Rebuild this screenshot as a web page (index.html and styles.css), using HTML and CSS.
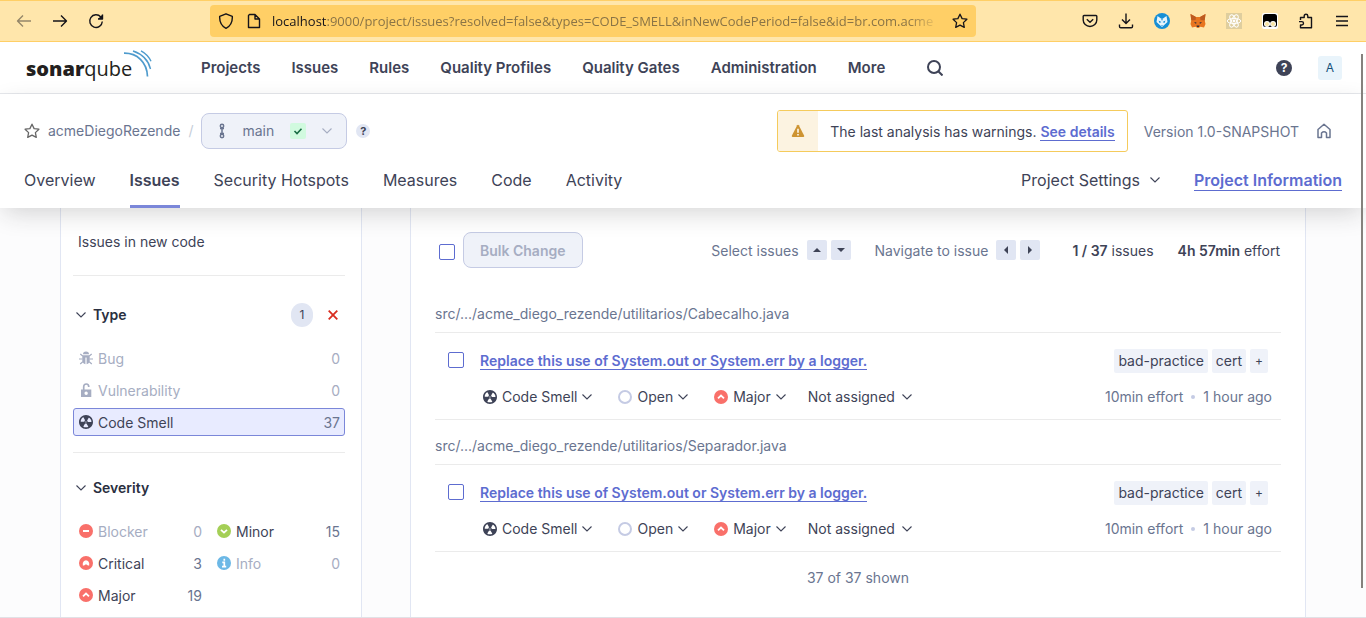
FILE: index.html
```html
<!DOCTYPE html>
<html lang="en">
<head>
<meta charset="utf-8">
<title>Issues - acmeDiegoRezende</title>
<link rel="stylesheet" href="styles.css">
</head>
<body>
<svg class="defs" aria-hidden="true">
  <symbol id="chevron" viewBox="0 0 10 10"><path d="M.5 2.500 5 7l4.500-4.500" fill="none" stroke="currentColor" stroke-width="1.100"/></symbol>
  <symbol id="smell" viewBox="2 2 12 12"><path fill="currentColor" fill-rule="evenodd" d="M8 2C4.700 2 2 4.700 2 8s2.700 6 6 6 6-2.700 6-6-2.700-6-6-6zm-.5 5.500h.9v.9h-.9v-.9zm-3.800.2c-.1 0-.2-.1-.2-.2 0-.4.100-1.200.600-2S5.300 4.200 5.600 4c.2 0 .3 0 .3.100l1.300 2.300c0 .1 0 .2-.1.200-.1.200-.2.300-.3.500-.1.200-.2.400-.2.500 0 .1-.1.200-.2.200l-2.700-.1zM9.900 12c-.3.200-1.100.5-2 .5-.9 0-1.700-.3-2-.5-.1 0-.1-.2-.1-.3l1.300-2.300c0-.1.100-.1.200-.1.200.1.300.1.500.1s.4 0 .5-.1c.1 0 .2 0 .2.100l1.300 2.300c.2.200.2.300.1.300zm2.500-4.100L9.700 8c-.1 0-.2-.1-.2-.2 0-.2-.1-.4-.2-.5 0-.1-.2-.3-.3-.4-.1 0-.1-.1 0-.2l1.300-2.300c.1-.1.200-.1.300-.1.300.2 1 .7 1.500 1.500s.6 1.600.6 2c0 0-.1.100-.3.100z"/></symbol>
  <symbol id="major" viewBox="0 0 14 14"><circle cx="7" cy="7" r="7" fill="#f9706a"/><path d="M4 8.400 7 5.600l3 2.800" fill="none" stroke="#fff" stroke-width="1.800"/></symbol>
  <symbol id="star" viewBox="0 0 16 16"><path d="m8 1.200 2.100 4.400 4.800.6-3.500 3.400.9 4.800L8 12.100l-4.300 2.300.9-4.800L1.100 6.200l4.800-.6z" fill="none" stroke="currentColor" stroke-width="1.300" stroke-linejoin="round"/></symbol>
</svg>

<div class="browser">
  <div class="browser-nav">
    <button class="tool faded" aria-label="Back"><svg viewBox="0 0 16 16"><path d="M15 8H1.500M7 2.500 1.500 8 7 13.500"/></svg></button>
    <button class="tool" aria-label="Forward"><svg viewBox="0 0 16 16"><path d="M1 8h13.500M9 2.500 14.500 8 9 13.500"/></svg></button>
    <button class="tool" aria-label="Reload"><svg viewBox="0 0 16 16"><path d="M12.800 4A6.300 6.300 0 1 0 14.300 8.500M14.500 1.500v4.500H10"/><path d="M14.500 1.500V6H10z" fill="currentColor" stroke="none"/></svg></button>
  </div>
  <div class="address">
    <svg class="tool-icon" viewBox="0 0 16 16"><path d="M8 .8 14.300 3.300c.3 5-1.400 9.500-6.300 12-4.900-2.500-6.600-7-6.300-12z"/></svg>
    <svg class="tool-icon" viewBox="0 0 16 16"><path d="M3.500 1.500H9l4.500 4.500v8.500h-11v-12zM9 1.500V6h4.500"/></svg>
    <div class="url"><span class="host">localhost</span>:9000/project/issues?resolved=false&amp;types=CODE_SMELL&amp;inNewCodePeriod=false&amp;id=br.com.acme</div>
    <button class="tool" aria-label="Bookmark"><svg viewBox="0 0 16 16"><use href="#star"/></svg></button>
  </div>
  <div class="extensions">
    <button class="tool" aria-label="Pocket"><svg viewBox="0 0 16 16"><path d="M2 2.500h12q.8 0 .8.800V7A6.800 6.500 0 0 1 1.200 7V3.300q0-.8.800-.8zM4.800 6.300 8 9.300l3.200-3"/></svg></button>
    <button class="tool" aria-label="Downloads"><svg viewBox="0 0 16 16"><path d="M8 .5v10M4 6.500l4 4 4-4M1.500 11.500v2q0 1.300 1.300 1.300h10.400q1.300 0 1.300-1.300v-2"/></svg></button>
    <button class="tool" aria-label="Wolf extension"><svg viewBox="0 0 16 16"><g stroke="none"><circle cx="8" cy="8" r="8" fill="#168fd6"/><path d="M3.500 3 7 5.500h2L12.500 3l1 6L8 14 2.500 9z" fill="#e8f5fd"/><path d="m4.500 7.500 3 1.500-2 1zM11.500 7.500l-3 1.500 2 1zM7 12h2l-1 1zM7 5.500h2L8 8z" fill="#168fd6"/></g></svg></button>
    <button class="tool" aria-label="Fox wallet"><svg viewBox="0 0 16 16"><g stroke="none"><path d="m.5 1 5.500 3h4l5.500-3-.8 6.500.8 3.500-1.500 3.500-3.500-.8L8.500 15h-1l-2-1.300-3.500.8L.500 11l.8-3.500z" fill="#e8751f"/><path d="m.5 1 5.500 3-.5 3-4.200.5zM15.500 1 10 4l.5 3 4.200.5z" fill="#bd5a20"/><path d="m4 9 2.500.5-.5 1.500zM12 9l-2.500.5L10 11zM6.500 12.500h3L9 14H7z" fill="#30303a"/></g></svg></button>
    <button class="tool" aria-label="React tools"><svg viewBox="0 0 16 16"><path d="M0 0h16v16H0z" fill="#dfce9e" stroke="none"/><g stroke="#fff" stroke-width="1" fill="none"><ellipse cx="8" cy="8" rx="6.800" ry="2.600"/><ellipse cx="8" cy="8" rx="6.800" ry="2.600" transform="rotate(60 8 8)"/><ellipse cx="8" cy="8" rx="6.800" ry="2.600" transform="rotate(120 8 8)"/></g><circle cx="8" cy="8" r="1.400" fill="#fff" stroke="none"/></svg></button>
    <button class="tool" aria-label="Script manager"><svg viewBox="0 0 16 16"><g stroke="none"><rect width="16" height="16" rx="2" fill="#fff"/><rect x="1" y="1" width="14" height="13" rx="2.500" fill="#000"/><circle cx="5" cy="11" r="3" fill="#fff"/><circle cx="11" cy="11" r="3" fill="#fff"/><circle cx="5" cy="11" r="2" fill="#f7e3a4"/><circle cx="11" cy="11" r="2" fill="#f7e3a4"/></g></svg></button>
    <button class="tool" aria-label="Extensions"><svg viewBox="0 0 16 16"><path d="M2.500 7V4.500h3.700V3a1.800 1.800 0 0 1 3.600 0v1.500h3.700v10.300H2.500V12h1.300a1.700 1.700 0 0 0 0-3.400H1"/></svg></button>
    <button class="tool" aria-label="Menu"><svg viewBox="0 0 16 16"><path d="M2 3.500h12M2 8h12M2 12.500h12"/></svg></button>
  </div>
</div>

<nav class="global-nav">
  <a class="logo" href="#" aria-label="SonarQube"><span class="logo-text"><b>sonar</b>qube</span><svg class="waves" viewBox="0 0 28 28" fill="none" stroke="#4e9bcd" stroke-width="1.400"><path d="M0 3.200C13 3 23 12 23.500 26.500" stroke-width="1.700"/><path d="M9 1C18 4 24.500 10.500 26.500 19"/><path d="M17 .8c4.500 2.400 8 6 10 10.500"/></svg></a>
  <div class="global-links">
    <a href="#">Projects</a><a href="#">Issues</a><a href="#">Rules</a><a href="#">Quality Profiles</a><a href="#">Quality Gates</a><a href="#">Administration</a><a href="#">More</a>
  </div>
  <button class="search" aria-label="Search"><svg viewBox="0 0 16 16" fill="none" stroke="currentColor" stroke-width="2"><circle cx="7" cy="7" r="6"/><path d="m11.300 11.300 4.200 4.200"/></svg></button>
  <button class="help" aria-label="Help">?</button>
  <button class="avatar">A</button>
</nav>

<header class="project">
  <div class="project-top">
    <button class="favorite" aria-label="Favorite"><svg viewBox="0 0 16 16"><use href="#star"/></svg></button>
    <a class="project-name" href="#">acmeDiegoRezende</a>
    <span class="slash">/</span>
    <button class="branch">
      <svg class="branch-icon" viewBox="0 0 8 16" fill="none" stroke="currentColor" stroke-width="1.500"><circle cx="4" cy="3" r="1.700"/><circle cx="4" cy="13" r="1.700"/><path d="M4 4.700v6.600M2 5.500h4M2 10.500h4"/></svg>
      <span>main</span>
      <svg class="passed" viewBox="0 0 16 16"><rect width="16" height="16" rx="2" fill="#d1fadf"/><path d="m4.500 8 2.500 2.500 4.500-4.700" fill="none" stroke="#176b43" stroke-width="1.600"/></svg>
      <svg class="chevron dim"><use href="#chevron"/></svg>
    </button>
    <button class="hint" aria-label="Branch help">?</button>
    <div class="warning">
      <span class="warning-icon"><svg viewBox="0 0 14 14"><path d="M7 .8q.5 0 .8.500l5.400 10.500q.3 1-.7 1.200h-11q-1-.2-.7-1.200L6.200 1.300Q6.500.8 7 .8z" fill="#ce9432"/><path d="M7 4.800v4M7 10v1.600" stroke="#fff" stroke-width="1.500"/></svg></span>
      <span class="warning-text">The last analysis has warnings. <a class="link" href="#">See details</a></span>
    </div>
    <span class="version">Version 1.0-SNAPSHOT</span>
    <a class="home" href="#" aria-label="Homepage"><svg viewBox="0 0 16 16" fill="none" stroke="currentColor" stroke-width="1.500" stroke-linejoin="round"><path d="M2 6.500 8 1.200l6 5.300V14.500h-3.500V10q-2.500-2.500-5 0v4.500H2z"/></svg></a>
  </div>
  <div class="tabs">
    <a href="#">Overview</a><a class="active" href="#">Issues</a><a href="#">Security Hotspots</a><a href="#">Measures</a><a href="#">Code</a><a href="#">Activity</a>
    <button class="settings">Project Settings <svg class="chevron"><use href="#chevron"/></svg></button>
    <a class="information" href="#"><span class="link">Project Information</span></a>
  </div>
</header>

<div class="page">
  <aside class="filters">
    <button class="new-code">Issues in new code</button>
    <section class="facet">
      <div class="facet-head">
        <button class="facet-title"><svg class="chevron"><use href="#chevron"/></svg>Type</button>
        <span class="count">1</span>
        <button class="clear" aria-label="Clear"><svg viewBox="0 0 10 10" stroke="#d92d20" stroke-width="1.800"><path d="m.7.700 8.600 8.600M9.300.7.700 9.300"/></svg></button>
      </div>
      <button class="item off"><svg viewBox="0 0 14 14" fill="currentColor"><path d="M4 3.300a3 2.800 0 0 1 6 0zM3.300 4.200h7.400v6.300Q9.500 13 7.600 13.300V6.500H6.400v6.800Q4.500 13 3.300 10.500z"/><path d="m1.300 3 2.400 2M0 8h3.500M1.200 13l2.600-2.200M12.700 3l-2.400 2M14 8h-3.500M12.800 13l-2.600-2.200" stroke="currentColor" stroke-width="1.200"/></svg><span>Bug</span><span class="num">0</span></button>
      <button class="item off"><svg viewBox="0 0 14 14" fill="currentColor"><path fill-rule="evenodd" d="M2 6.500h10.300V14H2zM7.100 8.500a1.700 1.700 0 1 0 .1 3.400 1.700 1.700 0 0 0-.1-3.400z"/><path d="M4.700 7V4q0-3 2.600-3 2.500 0 2.500 3" fill="none" stroke="currentColor" stroke-width="1.700"/></svg><span>Vulnerability</span><span class="num">0</span></button>
      <button class="item selected"><svg><use href="#smell"/></svg><span>Code Smell</span><span class="num">37</span></button>
    </section>
    <section class="facet severity">
      <div class="facet-head">
        <button class="facet-title"><svg class="chevron"><use href="#chevron"/></svg>Severity</button>
      </div>
      <div class="columns">
        <button class="item off"><svg viewBox="0 0 14 14"><circle cx="7" cy="7" r="7" fill="#f9706a"/><path d="M4 7h6" stroke="#fff" stroke-width="2"/></svg><span>Blocker</span><span class="num">0</span></button>
        <button class="item"><svg viewBox="0 0 14 14"><circle cx="7" cy="7" r="7" fill="#a4cf56"/><path d="m4 5.800 3 2.800 3-2.800" fill="none" stroke="#fff" stroke-width="1.800"/></svg><span>Minor</span><span class="num">15</span></button>
        <button class="item"><svg viewBox="0 0 14 14"><circle cx="7" cy="7" r="7" fill="#f9706a"/><path d="M3.800 9.500V7Q4.500 4.300 7 4.300T10.200 7v2.500H9L7 8.200 5 9.500z" fill="#fff"/></svg><span>Critical</span><span class="num">3</span></button>
        <button class="item off"><svg viewBox="0 0 14 14"><circle cx="7" cy="7" r="7" fill="#6cb8e6"/><path d="M7.300 2.700v2M5.300 6.300h2v4.200M5 10.700h4.200" fill="none" stroke="#fff" stroke-width="1.700"/></svg><span>Info</span><span class="num">0</span></button>
        <button class="item"><svg><use href="#major"/></svg><span>Major</span><span class="num">19</span></button>
      </div>
    </section>
  </aside>

  <main class="issues">
    <div class="toolbar">
      <input type="checkbox" class="check" aria-label="Select all issues">
      <button class="bulk" disabled>Bulk Change</button>
      <div class="keys"><span>Select issues</span><kbd><svg viewBox="0 0 8 8"><path d="M0 6h8L4 2z"/></svg></kbd><kbd><svg viewBox="0 0 8 8"><path d="M0 2h8L4 6z"/></svg></kbd></div>
      <div class="keys"><span>Navigate to issue</span><kbd><svg viewBox="0 0 8 8"><path d="M6 0v8L2 4z"/></svg></kbd><kbd><svg viewBox="0 0 8 8"><path d="M2 0v8l4-4z"/></svg></kbd></div>
      <span class="total"><b>1 / 37</b> issues</span>
      <span class="effort"><b>4h 57min</b> effort</span>
    </div>

    <div class="path">src/.../acme_diego_rezende/utilitarios/Cabecalho.java</div>
    <article class="issue">
      <input type="checkbox" class="check" aria-label="Select issue in Cabecalho.java">
      <div class="issue-body">
        <div class="issue-line"><a class="link" href="#">Replace this use of System.out or System.err by a logger.</a>
          <div class="tags"><span>bad-practice</span><span>cert</span><button aria-label="Add tag">+</button></div></div>
        <div class="issue-line meta">
          <button class="kind"><svg><use href="#smell"/></svg>Code Smell<svg class="chevron"><use href="#chevron"/></svg></button>
          <button class="status"><i class="ring"></i>Open<svg class="chevron"><use href="#chevron"/></svg></button>
          <button class="sev"><svg><use href="#major"/></svg>Major<svg class="chevron"><use href="#chevron"/></svg></button>
          <button class="assignee">Not assigned<svg class="chevron"><use href="#chevron"/></svg></button>
          <div class="age"><span>10min effort</span><i class="dot"></i><span>1 hour ago</span></div>
        </div>
      </div>
    </article>

    <div class="path">src/.../acme_diego_rezende/utilitarios/Separador.java</div>
    <article class="issue">
      <input type="checkbox" class="check" aria-label="Select issue in Separador.java">
      <div class="issue-body">
        <div class="issue-line"><a class="link" href="#">Replace this use of System.out or System.err by a logger.</a>
          <div class="tags"><span>bad-practice</span><span>cert</span><button aria-label="Add tag">+</button></div></div>
        <div class="issue-line meta">
          <button class="kind"><svg><use href="#smell"/></svg>Code Smell<svg class="chevron"><use href="#chevron"/></svg></button>
          <button class="status"><i class="ring"></i>Open<svg class="chevron"><use href="#chevron"/></svg></button>
          <button class="sev"><svg><use href="#major"/></svg>Major<svg class="chevron"><use href="#chevron"/></svg></button>
          <button class="assignee">Not assigned<svg class="chevron"><use href="#chevron"/></svg></button>
          <div class="age"><span>10min effort</span><i class="dot"></i><span>1 hour ago</span></div>
        </div>
      </div>
    </article>
    <p class="shown">37 of 37 shown</p>
  </main>
</div>
<div class="scroll-thumb"></div>
</body>
</html>
```
FILE: styles.css
```css
* { box-sizing: border-box; }
body {
  margin: 0;
  height: 100vh;
  display: flex;
  flex-direction: column;
  overflow: hidden;
  font: 14px/20px Inter, "Liberation Sans", sans-serif;
  color: #3e4357;
  background: #fff;
}
button { font: inherit; color: inherit; background: none; border: 0; padding: 0; margin: 0; display: flex; align-items: center; }
a { color: inherit; text-decoration: none; }
svg { flex: none; display: block; }
b { font-weight: 600; }
.defs { position: absolute; width: 0; height: 0; }
.chevron { width: 10px; height: 10px; }
.link { color: #5d6cd0; font-weight: 600; border-bottom: 1px solid #5d6cd0; }
.check {
  appearance: none;
  width: 16px;
  height: 16px;
  margin: 0;
  flex: none;
  border: 1px solid #5d6cd0;
  border-radius: 2px;
  background: #fff;
}

/* Browser bar */
.browser {
  flex: none;
  height: 42px;
  display: flex;
  align-items: center;
  background: #ffe6ab;
  border-top: 1px solid #ffcf66;
  border-bottom: 1px solid #ffcf66;
  color: #15141a;
}
.browser-nav { display: flex; gap: 20px; padding-left: 16px; width: 210px; flex: none; }
.tool { width: 16px; height: 16px; flex: none; }
.tool svg, .tool-icon { width: 16px; height: 16px; fill: none; stroke: currentColor; stroke-width: 1.4; stroke-linejoin: round; flex: none; }
.faded { opacity: .45; }
.address {
  display: flex;
  align-items: center;
  gap: 12px;
  width: 766px;
  height: 32px;
  padding: 0 8px;
  border-radius: 4px;
  background: #ffcf66;
}
.url {
  flex: 1;
  min-width: 0;
  overflow: hidden;
  white-space: nowrap;
  margin-left: -2px;
  font: 13px/20px "Open Sans", "Noto Sans", sans-serif;
  color: #8a7446;
  -webkit-mask-image: linear-gradient(to left, transparent, #000 32px);
  mask-image: linear-gradient(to left, transparent, #000 32px);
}
.host { color: #15141a; }
.extensions { display: flex; gap: 20px; margin-left: auto; padding-right: 16px; }

/* Global navigation */
.global-nav {
  flex: none;
  height: 52px;
  display: flex;
  align-items: center;
  padding: 0 24px;
  border-bottom: 1px solid #e6e8ec;
}
.logo { display: flex; width: 177px; padding-left: 2px; padding-bottom: 4px; color: #231f20; }
.logo-text { padding-top: 6px; font: 20px/26px "Open Sans", sans-serif; }
.logo-text b { font-weight: 800; }
.waves { width: 28px; height: 28px; margin-left: -8px; }
.global-links { display: flex; gap: 31px; font-size: 15px; font-weight: 600; }
.search { margin-left: 42px; }
.search svg { width: 16px; height: 16px; }
.help { justify-content: center; width: 16px; height: 16px; margin-left: auto; border-radius: 50%; background: #3e4357; color: #fff; font-size: 12px; font-weight: 700; }
.avatar { justify-content: center; width: 24px; height: 24px; margin-left: 26px; border-radius: 3px; background: #e9f4fb; color: #15507a; font-size: 12px; }

/* Project header */
.project { flex: none; position: relative; z-index: 1; padding: 16px 24px 0; background: #fff; box-shadow: 0 8px 24px -4px #22222233; }
.project-top { display: flex; align-items: center; height: 42px; color: #6a7590; }
.favorite svg { width: 16px; height: 16px; color: #666; }
.project-name { margin-left: 8px; }
.slash { margin: 0 8px; color: #c5cdd8; }
.branch { height: 36px; width: 146px; padding: 0 14px 0 16px; border: 1px solid #c5cbe4; border-radius: 8px; background: #eff2f9; }
.branch-icon { width: 8px; height: 16px; margin-right: 16px; }
.passed { width: 16px; height: 16px; margin-left: 16px; margin-right: auto; }
.dim { color: #a6adc2; }
.hint { justify-content: center; width: 14px; height: 14px; margin-left: 9px; border-radius: 50%; background: #e1e6f3; color: #3e4357; font-size: 11px; font-weight: 700; }
.warning { display: flex; height: 42px; margin-left: auto; border: 1px solid #f5cb5c; border-radius: 3px; color: #3e4357; overflow: hidden; }
.warning-icon { display: grid; place-items: center; width: 40px; background: #fcf3e1; }
.warning-icon svg { width: 14px; height: 14px; }
.warning-text { padding: 11px 12px 9px; }
.version { margin-left: 16px; padding-top: 2px; }
.home { margin: 0 10px 0 17px; }
.home svg { width: 16px; height: 16px; }
.tabs { display: flex; height: 56px; gap: 34px; font-size: 16px; line-height: 24px; }
.tabs > * { display: flex; align-items: center; white-space: nowrap; }
.tabs .active { font-weight: 600; box-shadow: inset 0 -3px #7b87d9; }
.tabs .settings { margin-left: auto; gap: 10px; }
.tabs .link { line-height: 20px; }

/* Page */
.page {
  flex: 1;
  min-height: 0;
  display: flex;
  gap: 48px;
  padding: 0 60px;
  overflow: hidden;
  background: #fcfcfd;
  border-bottom: 1px solid #e1e1e6;
}
.filters { width: 302px; flex: none; padding: 24px 16px 0 12px; background: #fff; border: solid #e1e6f3; border-width: 0 1px; }
.new-code { padding-left: 5px; }
.facet { margin-top: 23px; padding-top: 23px; border-top: 1px solid #ebebeb; }
.facet-head { display: flex; align-items: center; height: 32px; margin-bottom: 13px; }
.facet-title { gap: 7px; padding-left: 3px; font-weight: 600; color: #2a2f40; }
.facet-title .chevron { color: #3e4357; }
.count { min-width: 22px; height: 24px; margin-left: auto; line-height: 24px; text-align: center; font-size: 12px; border-radius: 12px; background: #e1e6f3; }
.clear { margin: 0 7px 0 15px; }
.clear svg { width: 10px; height: 10px; }
.item { width: 100%; height: 28px; gap: 5px; padding: 0 4px 0 5px; border: 1px solid transparent; border-radius: 3px; margin-bottom: 4px; }
.item svg { width: 14px; height: 14px; }
.item span { padding-top: 2px; }
.item .num { margin-left: auto; color: #6a7590; }
.off, .item.off .num { color: #a6adc2; }
.selected { background: #e8ebff; border-color: #7b87d9; }
.facet .selected { margin-bottom: 0; }
.severity { margin-top: 16px; padding-top: 19px; }
.columns { display: grid; grid-template-columns: 1fr 1fr; column-gap: 4px; }

.issues { flex: 1; min-width: 0; padding: 24px 24px 0; background: #fff; border: solid #e1e6f3; border-width: 0 1px; }
.toolbar { display: flex; align-items: center; height: 36px; padding: 0 1px 0 4px; }
.toolbar .check { margin-top: 3px; }
.bulk { height: 36px; margin-left: 8px; padding: 2px 16px 0; font-weight: 600; color: #a6adc2; background: #eff2f9; border: 1px solid #c5cbe4; border-radius: 8px; }
.keys { display: flex; align-items: center; gap: 4px; margin-right: 24px; color: #6a7590; }
.bulk + .keys { margin-left: auto; }
.keys span { margin-right: 4px; padding-top: 2px; }
.keys kbd { display: grid; place-items: center; width: 20px; height: 20px; border-radius: 2px; background: #e1e6f3; }
.keys svg { width: 8px; height: 8px; fill: #3e4357; }
.total, .effort { padding-top: 2px; }
.total { margin: 0 24px 0 8px; }
.path { padding: 16px 0 8px; color: #6a7590; border-bottom: 1px solid #ebebeb; }
.toolbar + .path { margin-top: 20px; }
.issue { display: flex; gap: 16px; padding: 16px 9px 12px 13px; border-bottom: 1px solid #ebebeb; }
.issue .check { margin-top: 3px; }
.issue-body { flex: 1; min-width: 0; }
.issue-line { display: flex; align-items: center; justify-content: space-between; height: 24px; }
.issue-line > .link { line-height: 17px; }
.tags { display: flex; gap: 4px; margin-right: 4px; }
.tags > * { height: 24px; padding: 0 4px; line-height: 24px; border-radius: 2px; background: #eff2f9; }
.tags button { padding: 0 5px; font-size: 12px; }
.meta { justify-content: flex-start; height: 20px; margin-top: 14px; padding-left: 3px; }
.meta button { gap: 5px; white-space: nowrap; }
.meta svg, .ring { width: 14px; height: 14px; }
.meta svg.chevron { width: 10px; height: 10px; }
.ring { border: 2px solid #c5cbe4; border-radius: 50%; }
.meta .status, .meta .sev { margin-left: 26px; }
.meta .assignee { margin-left: 22px; gap: 7px; }
.age { display: flex; align-items: center; gap: 8px; margin-left: auto; color: #6a7590; }
.dot { width: 4px; height: 4px; border-radius: 50%; background: #c5cbe4; }
.shown { margin: 16px 0 0; text-align: center; color: #6a7590; }

.scroll-thumb { position: absolute; z-index: 2; right: 3px; top: 54px; bottom: 30px; width: 2px; background: #85817d; }
```
